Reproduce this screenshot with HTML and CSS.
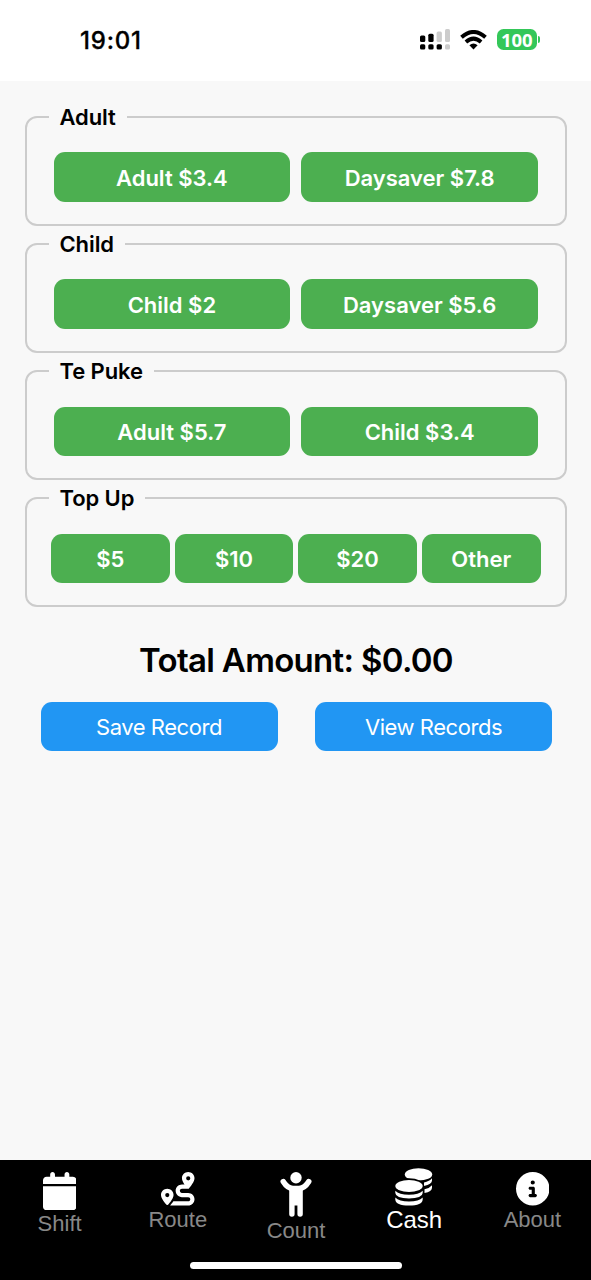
FILE: index.html
```html
<!DOCTYPE html>
<html lang="en">
<head>
<meta charset="utf-8">
<title>Cash</title>
<link rel="stylesheet" href="styles.css">
</head>
<body>
<header class="status">
  <span class="clock">19:01</span>
  <div class="indicators">
    <svg class="signal" width="30" height="21" viewBox="0 0 30 21"><g fill="#000"><rect y="6.500" width="5.300" height="6.500" rx="1.500"/><rect x="8.300" y="4.800" width="5.300" height="8.200" rx="1.500"/><rect y="15.300" width="5.300" height="5.200" rx="1.500"/><rect x="8.300" y="15.300" width="5.300" height="5.200" rx="1.500"/><rect x="16.600" y="15.300" width="5.300" height="5.200" rx="1.500"/></g><g fill="#ccc"><rect x="16.600" y="2.500" width="5.300" height="10.500" rx="1.500"/><rect x="25" y="0" width="5" height="13" rx="1.500"/><rect x="25" y="15.300" width="5" height="5.200" rx="1.500"/></g></svg>
    <svg class="wifi" width="27" height="20" viewBox="0 0 27 20"><g fill="none" stroke="#000" stroke-width="3.900"><path d="M1.500 7.300Q13.500-3.400 25.500 7.300"/><path d="M5.900 12Q13.500 5.200 21.100 12"/></g><path d="M9.400 15.200Q13.500 11.900 17.600 15.200L13.500 19.500Z"/></svg>
    <div class="battery"><span class="level">100</span><i class="cap"></i></div>
  </div>
</header>
<main class="content">
  <fieldset class="group"><legend>Adult</legend><div class="fares"><button class="fare">Adult $3.4</button><button class="fare">Daysaver $7.8</button></div></fieldset>
  <fieldset class="group"><legend>Child</legend><div class="fares"><button class="fare">Child $2</button><button class="fare">Daysaver $5.6</button></div></fieldset>
  <fieldset class="group"><legend>Te Puke</legend><div class="fares"><button class="fare">Adult $5.7</button><button class="fare">Child $3.4</button></div></fieldset>
  <fieldset class="group"><legend>Top Up</legend><div class="fares topup"><button class="fare">$5</button><button class="fare">$10</button><button class="fare">$20</button><button class="fare">Other</button></div></fieldset>
  <h1 class="total">Total Amount: $0.00</h1>
  <div class="actions"><button class="action">Save Record</button><button class="action">View Records</button></div>
</main>
<nav class="tabs">
  <a class="tab"><svg width="33.500" height="38.300" viewBox="0 0 448 512"><path d="M96 32V64H48C21.500 64 0 85.500 0 112v48H448V112c0-26.500-21.500-48-48-48H352V32c0-17.700-14.300-32-32-32s-32 14.300-32 32V64H160V32c0-17.700-14.300-32-32-32S96 14.300 96 32zM448 192H0V464c0 26.500 21.500 48 48 48H400c26.500 0 48-21.500 48-48V192z"/></svg><span>Shift</span></a>
  <a class="tab"><svg width="33.500" height="33.500" viewBox="0 0 512 512"><path d="M512 96c0 50.200-59.100 125.100-84.600 155c-3.800 4.400-9.400 6.100-14.500 5H320c-17.700 0-32 14.300-32 32s14.300 32 32 32h96c53 0 96 43 96 96s-43 96-96 96H139.600c8.700-9.900 19.300-22.600 30-36.800c6.300-8.400 12.800-17.600 19-27.200H416c17.700 0 32-14.300 32-32s-14.300-32-32-32H320c-53 0-96-43-96-96s43-96 96-96h39.800c-21-31.500-39.800-67.700-39.800-96c0-53 43-96 96-96s96 43 96 96zM117.100 489.100c-3.800 4.300-7.200 8.100-10.100 11.300l-1.800 2-.2-.2c-6 4.600-14.600 4-20-1.800C59.800 473 0 402.500 0 352c0-53 43-96 96-96s96 43 96 96c0 30-21.100 67-43.500 97.900c-10.700 14.700-21.700 28-30.800 38.500l-.6 .7zM128 352a32 32 0 1 0 -64 0 32 32 0 1 0 64 0zM416 128a32 32 0 1 0 0-64 32 32 0 1 0 0 64z"/></svg><span>Route</span></a>
  <a class="tab"><svg width="32" height="45" viewBox="0 0 32 45"><circle cx="16" cy="5.700" r="5.700"/><path d="M3.200 9.500Q7.500 16.500 13 16.500H19Q24.500 16.500 28.800 9.500" fill="none" stroke="#fff" stroke-width="5.400" stroke-linecap="round"/><path d="M9.200 15H22.800V42A2.700 2.700 0 0 1 17.400 42V33.500H14.600V42A2.700 2.700 0 0 1 9.200 42Z"/></svg><span>Count</span></a>
  <a class="tab active"><svg width="38" height="38" viewBox="0 0 38 38"><ellipse cx="23.500" cy="6.400" rx="13.700" ry="6.200"/><path d="M29 14.500Q34.500 13.300 37 10.300V12.500Q37 16.200 29 18ZM29.500 21.300Q34.500 20.300 37 17.200V19.700Q37 23.500 29.500 25Z"/><ellipse cx="14" cy="18" rx="15.200" ry="7.700" fill="#000"/><ellipse cx="14" cy="18" rx="13.700" ry="6.100"/><path d="M.3 22.800Q4 26.700 14 26.700T27.700 22.800V25Q27.300 30.400 14 30.400T.3 25ZM.3 29.500Q4 33.500 14 33.500T27.700 29.500V31.500Q27.300 37.500 14 37.500T.3 31.500Z"/></svg><span>Cash</span></a>
  <a class="tab"><svg width="33.500" height="33.500" viewBox="0 0 512 512"><path d="M256 512A256 256 0 1 0 256 0a256 256 0 1 0 0 512zM216 336h24V272H216c-13.300 0-24-10.700-24-24s10.700-24 24-24h48c13.300 0 24 10.700 24 24v88h8c13.300 0 24 10.700 24 24s-10.700 24-24 24H216c-13.300 0-24-10.700-24-24s10.700-24 24-24zm40-208a32 32 0 1 1 0 64 32 32 0 1 1 0-64z"/></svg><span>About</span></a>
  <div class="home"></div>
</nav>
</body>
</html>
```
FILE: styles.css
```css
* { box-sizing: border-box; }
body { margin: 0; height: 1280px; display: flex; flex-direction: column; background: #f8f8f8; color: #000; font-family: Inter, "Liberation Sans", sans-serif; overflow: hidden; }
button { border: 0; padding: 1px 0 0; border-radius: 11px; height: 49.5px; color: #fff; font-family: inherit; font-size: 22px; }
.status { height: 81px; flex: none; background: #fff; display: flex; justify-content: space-between; padding: 0 51px 0 80px; }
.clock { font-size: 24px; font-weight: 500; line-height: 30px; margin-top: 26px; letter-spacing: .8px; -webkit-text-stroke: .3px #000; }
.indicators { display: flex; align-items: flex-start; padding-top: 29px; }
.wifi { margin: .5px 10px 0; }
.battery { display: flex; align-items: center; gap: 1px; }
.level { width: 39.5px; height: 21px; border-radius: 6.5px; background: #34c759; color: #fff; font: 700 18.5px/21.5px "Open Sans", sans-serif; text-align: center; }
.cap { width: 2.5px; height: 7px; background: #34c759; border-radius: 0 3px 3px 0; }
.content { flex: 1; padding: 23px 24px 0 25px; }
.group { margin: 0 0 5.1px; min-width: 0; height: 122px; border: 2px solid #ccc; border-radius: 12px; padding: 22.4px 27px 0 26.5px; }
legend { margin-left: -5px; padding: 0 11px; font-size: 22px; font-weight: 600; line-height: 26px; letter-spacing: -.1px; }
.fares { display: grid; grid-template-columns: 1fr 1fr; gap: 11px; }
.topup { grid-template-columns: repeat(4, 1fr); gap: 5px; margin: 0 -2.5px; }
.fare { background: #4caf50; font-weight: 600; }
.total { margin: 33px 0 21.3px; text-align: center; font-size: 33px; font-weight: 600; line-height: 40px; letter-spacing: -.7px; }
.actions { display: flex; justify-content: space-between; padding: 0 15px 0 15.5px; }
.action { width: 237px; background: #2196f3; font-weight: 400; letter-spacing: -.45px; }
.tabs { flex: none; height: 120px; background: #000; position: relative; display: grid; grid-template-columns: repeat(5, 1fr); }
.tab { display: flex; flex-direction: column; align-items: center; padding: 12px 0 0 1px; color: #888; font: 22px/27px "Liberation Sans", sans-serif; }
.tab svg { display: block; fill: #fff; }
.tab.active { padding-top: 8px; color: #fff; font-size: 24px; line-height: 28px; }
.home { position: absolute; bottom: 11px; left: 190px; width: 212px; height: 7px; border-radius: 4px; background: #fff; }
```
